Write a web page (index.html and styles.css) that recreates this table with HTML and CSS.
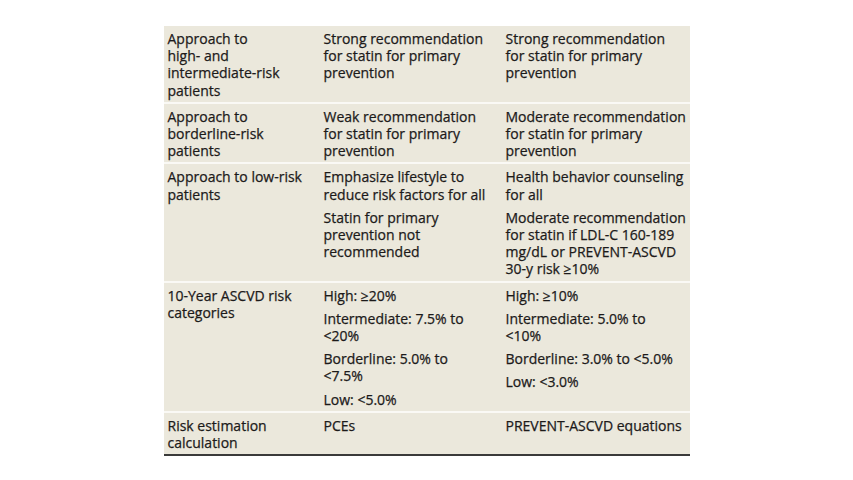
FILE: index.html
```html
<!DOCTYPE html>
<html lang="en">
<head>
<meta charset="utf-8">
<title>Statin recommendations</title>
<link rel="stylesheet" href="styles.css">
</head>
<body>
<table class="cmp">
  <colgroup>
    <col class="c1"><col class="c2"><col class="c3">
  </colgroup>
  <tbody>
    <tr>
      <td>Approach to<br>high- and<br>intermediate-risk<br>patients</td>
      <td>Strong recommendation<br>for statin for primary<br>prevention</td>
      <td>Strong recommendation<br>for statin for primary<br>prevention</td>
    </tr>
    <tr>
      <td>Approach to<br>borderline-risk<br>patients</td>
      <td>Weak recommendation<br>for statin for primary<br>prevention</td>
      <td>Moderate recommendation<br>for statin for primary<br>prevention</td>
    </tr>
    <tr>
      <td>Approach to low-risk<br>patients</td>
      <td>
        <div class="p">Emphasize lifestyle to<br>reduce risk factors for all</div>
        <div class="p">Statin for primary<br>prevention not<br>recommended</div>
      </td>
      <td>
        <div class="p">Health behavior counseling<br>for all</div>
        <div class="p">Moderate recommendation<br>for statin if LDL-C 160-189<br>mg/dL or PREVENT-ASCVD<br>30-y risk ≥10%</div>
      </td>
    </tr>
    <tr>
      <td>10-Year ASCVD risk<br>categories</td>
      <td>
        <div class="p">High: ≥20%</div>
        <div class="p">Intermediate: 7.5% to<br>&lt;20%</div>
        <div class="p">Borderline: 5.0% to<br>&lt;7.5%</div>
        <div class="p">Low: &lt;5.0%</div>
      </td>
      <td>
        <div class="p">High: ≥10%</div>
        <div class="p">Intermediate: 5.0% to<br>&lt;10%</div>
        <div class="p">Borderline: 3.0% to &lt;5.0%</div>
        <div class="p">Low: &lt;3.0%</div>
      </td>
    </tr>
    <tr>
      <td>Risk estimation<br>calculation</td>
      <td>PCEs</td>
      <td>PREVENT-ASCVD equations</td>
    </tr>
  </tbody>
</table>
</body>
</html>
```

FILE: styles.css
```css
html, body {
  margin: 0;
  padding: 0;
  background: #ffffff;
}

body {
  font-family: "Open Sans", "Noto Sans", sans-serif;
  font-size: 14px;
  line-height: 17.2px;
  color: #1c1a1a;
  -webkit-text-stroke: 0.25px #1c1a1a;
}

.cmp {
  width: 526px;
  margin: 26px auto 0;
  border-collapse: collapse;
  table-layout: fixed;
  background: #ebe8dc;
  border-bottom: 2px solid #3a3a3a;
}

.c1 { width: 156px; }
.c2 { width: 182px; }
.c3 { width: 188px; }

.cmp td {
  vertical-align: top;
  text-align: left;
  padding: 4px 4px 3px 4px;
  white-space: nowrap;
}

.cmp tr + tr td {
  border-top: 2px solid #faf9f5;
}

.p + .p {
  margin-top: 6px;
}
```
